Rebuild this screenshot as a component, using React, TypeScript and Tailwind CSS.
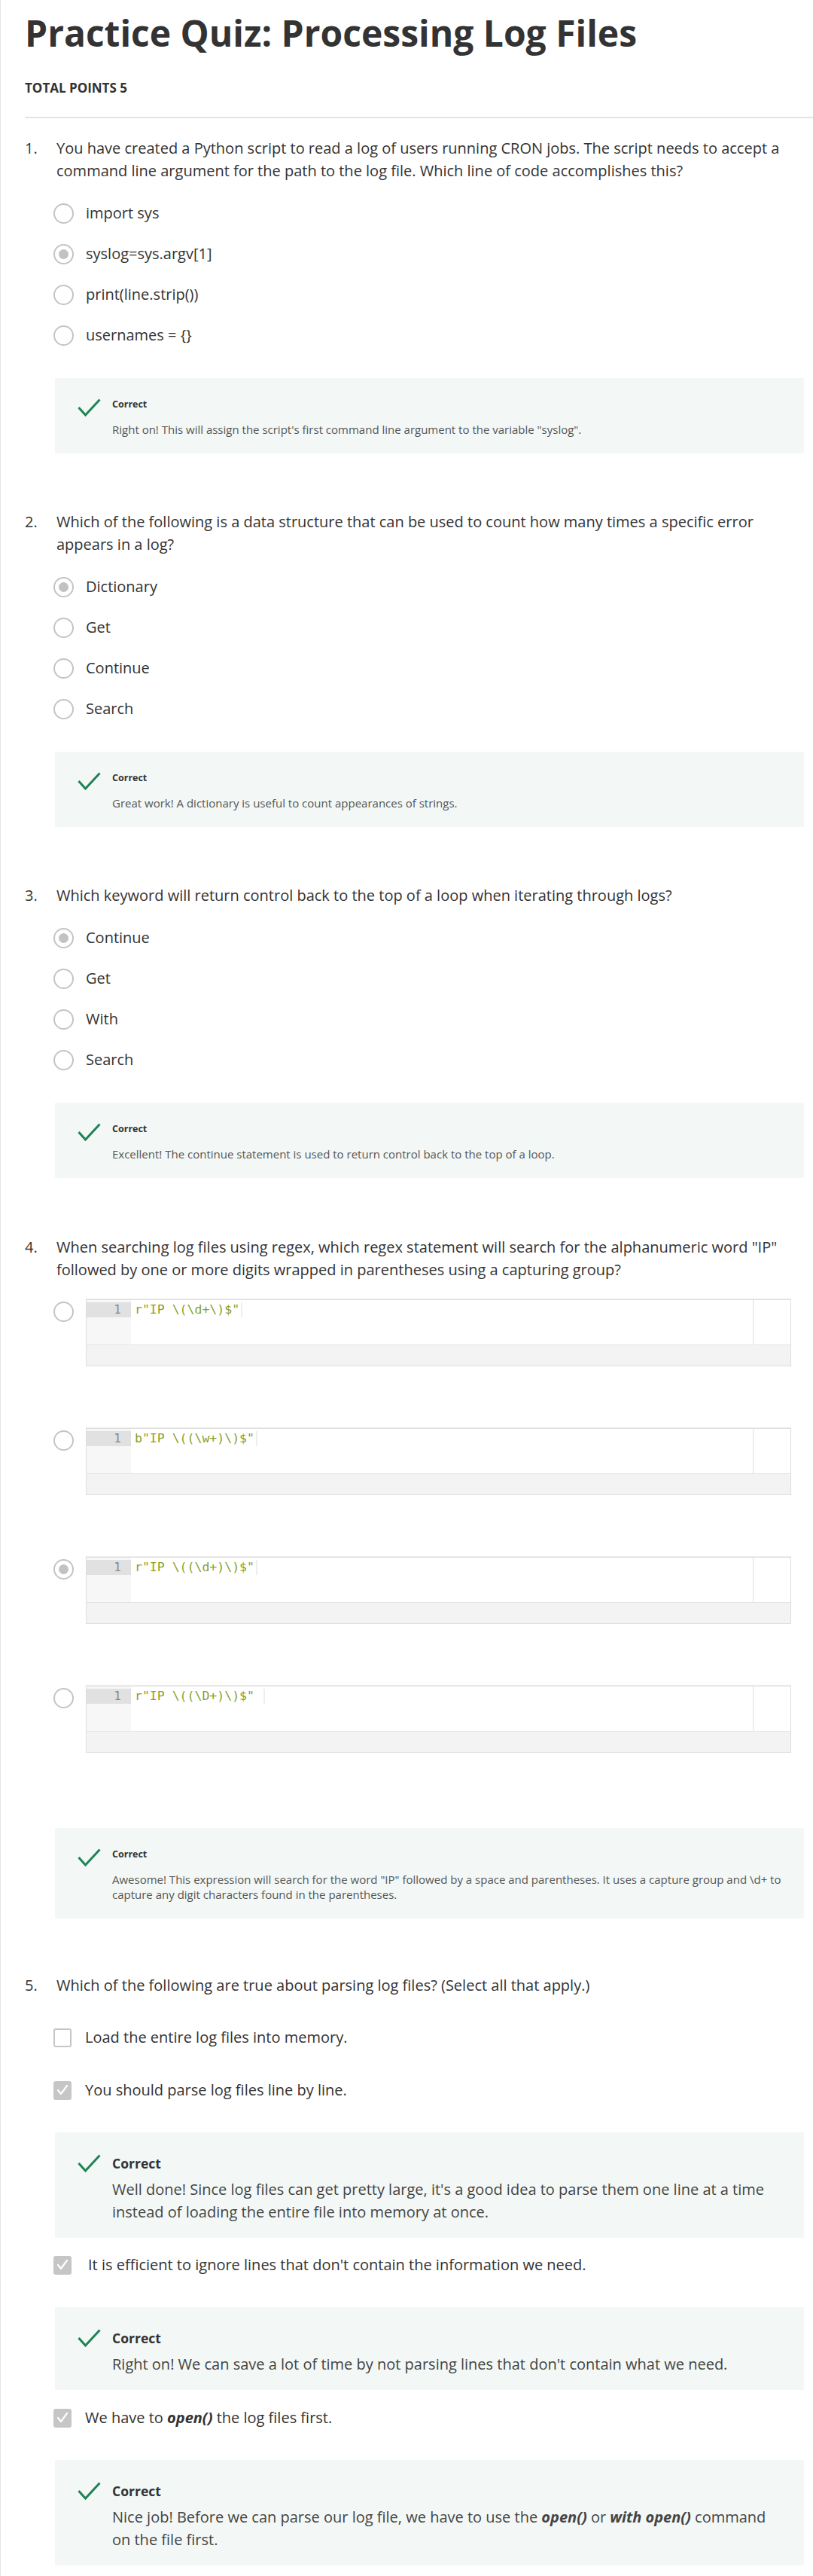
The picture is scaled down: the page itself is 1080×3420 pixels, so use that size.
import React from "react";

type Opt = { text: string; checked?: boolean };

function Radio({ checked }: { checked?: boolean }) {
  return (
    <span className="flex h-[27px] w-[27px] shrink-0 items-center justify-center rounded-full border-2 border-[#c4c4c4] bg-white">
      {checked && <span className="h-[13px] w-[13px] rounded-full bg-[#c2c2c2]" />}
    </span>
  );
}

function Checkbox({ checked }: { checked?: boolean }) {
  return (
    <span
      className={
        checked
          ? "flex h-[25px] w-[24px] shrink-0 items-center justify-center rounded-[3px] bg-[#c6c6c6]"
          : "flex h-[25px] w-[24px] shrink-0 items-center justify-center rounded-[3px] border-2 border-[#c6c6c6] bg-white"
      }
    >
      {checked && (
        <svg width="16" height="14" viewBox="0 0 16 14" fill="none">
          <polyline points="2,7 6,12 14,1" stroke="#ffffff" strokeWidth="2.2" strokeLinecap="round" strokeLinejoin="round" />
        </svg>
      )}
    </span>
  );
}

function CheckIcon() {
  return (
    <svg width="31" height="24" viewBox="0 0 31 24" fill="none" className="shrink-0">
      <polyline points="1.5,12 10.5,22 29.5,1.5" stroke="#1f8354" strokeWidth="3" strokeLinejoin="miter" />
    </svg>
  );
}

// small feedback panel used by questions 1-4
function Feedback({ children }: { children: React.ReactNode }) {
  return (
    <div className="ml-10 mt-[30px] flex bg-[#f3f8f6] pb-[22px] pl-[30px] pr-[18px] pt-[26px]">
      <div className="pt-px">
        <CheckIcon />
      </div>
      <div className="ml-[15px]">
        <div className="text-[12.5px] font-bold leading-[18px] text-[#333]">Correct</div>
        <div className="mt-[14px] text-[15px] leading-[20px] text-[#555]">{children}</div>
      </div>
    </div>
  );
}

// larger feedback panel used by question 5
function BigFeedback({ children }: { children: React.ReactNode }) {
  return (
    <div className="ml-10 mt-[29px] flex bg-[#f3f8f6] pb-[19px] pl-[30px] pr-[36px] pt-[28px]">
      <div className="pt-px">
        <CheckIcon />
      </div>
      <div className="ml-[15px]">
        <div className="text-[17.5px] font-bold leading-[26px] text-[#333]">Correct</div>
        <div className="mt-[7px] text-[20px] leading-[30px] text-[#444]">{children}</div>
      </div>
    </div>
  );
}

function QuestionText({ n, children }: { n: number; children: React.ReactNode }) {
  return (
    <div className="flex text-[20px] leading-[30px] text-[#333]">
      <span className="w-[42px] shrink-0">{n}.</span>
      <span className="pr-3">{children}</span>
    </div>
  );
}

function RadioList({ options }: { options: Opt[] }) {
  return (
    <div className="ml-[38px] mt-[14px]">
      {options.map((o) => (
        <div key={o.text} className="flex h-[54px] items-center gap-4 text-[20px] text-[#333]">
          <Radio checked={o.checked} />
          <span>{o.text}</span>
        </div>
      ))}
    </div>
  );
}

function CodeOption({ code, checked }: { code: string; checked?: boolean }) {
  return (
    <div className="ml-[38px] mr-[17px] flex items-start">
      <div className="mt-[3px]">
        <Radio checked={checked} />
      </div>
      <div className="ml-[16px] flex-1 border border-[#dedede] shadow-[0_-1px_0_#ececec]">
        <div className="flex h-[59px]">
          <div className="w-[59px] bg-[#f7f7f7]">
            <div className="mt-[3px] h-[20px] bg-[#e1e1e1] pr-[13px] text-right font-['DejaVu_Sans_Mono',monospace] text-[16px] leading-[20px] text-[#888]">
              1
            </div>
          </div>
          <div className="flex flex-1 border-r border-[#dedede] bg-white pl-[5px]">
            <span className="mt-[3px] h-[20px] whitespace-pre border-r-2 border-[#eeeeee] pr-[2px] font-['DejaVu_Sans_Mono',monospace] text-[16.5px] leading-[20px] text-[#85a12a]">
              {code}
            </span>
          </div>
          <div className="w-[49px] bg-white" />
        </div>
        <div className="h-[28px] border-t border-[#e4e4e4] bg-[#f3f3f3]" />
      </div>
    </div>
  );
}

export default function App() {
  return (
    <div className="min-h-screen border-l border-[#e6e6e6] bg-white pb-4 pl-8 pr-3 font-['Open_Sans',sans-serif]">
      {/* Header */}
      <h1 className="pt-[15px] text-[48px] font-bold leading-[58px] text-[#333]">
        Practice Quiz: Processing Log Files
      </h1>
      <div className="mt-[32px] text-[17px] font-bold leading-[24px] text-[#333]">TOTAL POINTS 5</div>
      <div className="-mr-3 mt-[26px] h-[2px] bg-[#e3e3e3]" />

      {/* Question 1 */}
      <div className="mt-[25px]">
        <QuestionText n={1}>
          You have created a Python script to read a log of users running CRON jobs. The script needs to accept a
          command line argument for the path to the log file. Which line of code accomplishes this?
        </QuestionText>
        <RadioList
          options={[
            { text: "import sys" },
            { text: "syslog=sys.argv[1]", checked: true },
            { text: "print(line.strip())" },
            { text: "usernames = {}" },
          ]}
        />
        <Feedback>Right on! This will assign the script's first command line argument to the variable "syslog".</Feedback>
      </div>

      {/* Question 2 */}
      <div className="mt-[76px]">
        <QuestionText n={2}>
          Which of the following is a data structure that can be used to count how many times a specific error
          appears in a log?
        </QuestionText>
        <RadioList
          options={[{ text: "Dictionary", checked: true }, { text: "Get" }, { text: "Continue" }, { text: "Search" }]}
        />
        <Feedback>Great work! A dictionary is useful to count appearances of strings.</Feedback>
      </div>

      {/* Question 3 */}
      <div className="mt-[76px]">
        <QuestionText n={3}>
          Which keyword will return control back to the top of a loop when iterating through logs?
        </QuestionText>
        <RadioList
          options={[{ text: "Continue", checked: true }, { text: "Get" }, { text: "With" }, { text: "Search" }]}
        />
        <Feedback>Excellent! The continue statement is used to return control back to the top of a loop.</Feedback>
      </div>

      {/* Question 4 */}
      <div className="mt-[77px]">
        <QuestionText n={4}>
          When searching log files using regex, which regex statement will search for the alphanumeric word "IP"
          followed by one or more digits wrapped in parentheses using a capturing group?
        </QuestionText>
        <div className="mt-[24px] flex flex-col gap-[82px]">
          <CodeOption code={'r"IP \\(\\d+\\)$"'} />
          <CodeOption code={'b"IP \\((\\w+)\\)$"'} />
          <CodeOption code={'r"IP \\((\\d+)\\)$"'} checked />
          <CodeOption code={'r"IP \\((\\D+)\\)$" '} />
        </div>
        <div className="mt-[100px]">
          <Feedback>
            Awesome! This expression will search for the word "IP" followed by a space and parentheses. It uses a
            capture group and \d+ to capture any digit characters found in the parentheses.
          </Feedback>
        </div>
      </div>

      {/* Question 5 */}
      <div className="mt-[74px]">
        <QuestionText n={5}>Which of the following are true about parsing log files? (Select all that apply.)</QuestionText>
        <div className="ml-[38px] mt-[27px] flex h-[54px] items-center gap-[18px] text-[20px] text-[#333]">
          <Checkbox />
          <span>Load the entire log files into memory.</span>
        </div>
        <div className="ml-[38px] mt-[16px] flex h-[54px] items-center gap-[18px] text-[20px] text-[#333]">
          <Checkbox checked />
          <span>You should parse log files line by line.</span>
        </div>
        <BigFeedback>
          Well done! Since log files can get pretty large, it's a good idea to parse them one line at a time instead of
          loading the entire file into memory at once.
        </BigFeedback>
        <div className="ml-[38px] mt-[9px] flex h-[54px] items-center gap-[18px] text-[20px] text-[#333]">
          <Checkbox checked />
          <span className="pl-1">It is efficient to ignore lines that don't contain the information we need.</span>
        </div>
        <BigFeedback>Right on! We can save a lot of time by not parsing lines that don't contain what we need.</BigFeedback>
        <div className="ml-[38px] mt-[10px] flex h-[54px] items-center gap-[18px] text-[20px] text-[#333]">
          <Checkbox checked />
          <span>
            We have to <b className="font-bold italic">open()</b> the log files first.
          </span>
        </div>
        <BigFeedback>
          Nice job! Before we can parse our log file, we have to use the <b className="font-bold italic">open()</b> or{" "}
          <b className="font-bold italic">with open()</b> command on the file first.
        </BigFeedback>
      </div>
    </div>
  );
}
